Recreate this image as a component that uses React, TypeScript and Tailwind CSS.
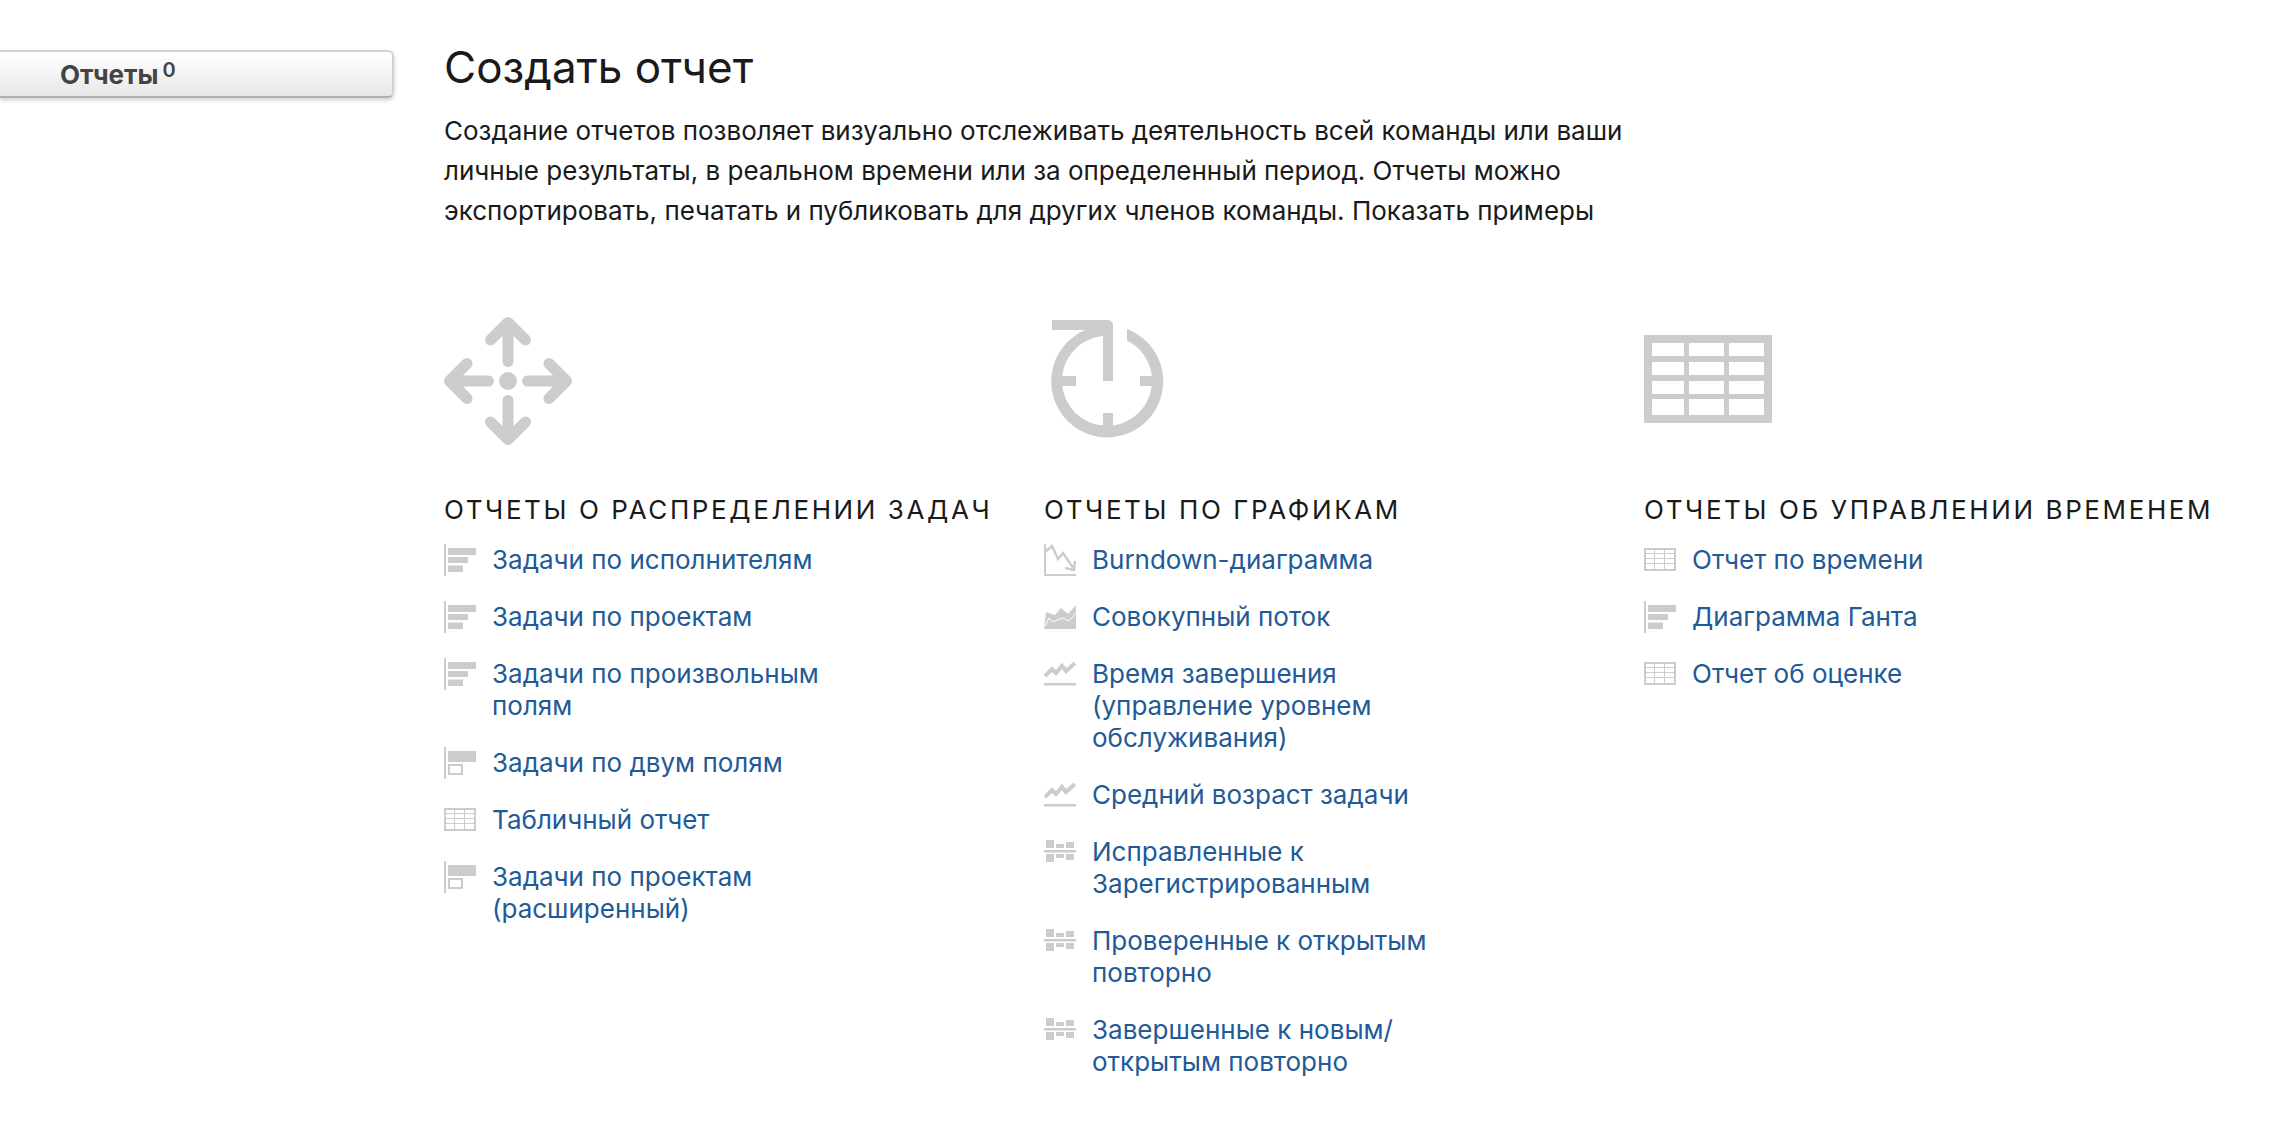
import React from "react";

type IconKind = "bars" | "nested" | "table" | "burndown" | "area" | "trend" | "balance";

function SmallIcon({ kind }: { kind: IconKind }) {
  return (
    <svg viewBox="0 0 32 32" className="size-8 shrink-0 fill-[#cccccc]" aria-hidden="true">
      {kind === "bars" && <path d="M0 0h2v32H0zM4 4h28v7H4zM4 13h20v6H4zM4 21.500h15v6.500H4z" />}
      {kind === "nested" && (
        <path fillRule="evenodd" d="M0 0h2v32H0zM4 4h28v11H4zM4 17h15v11H4zM6 19v7h11v-7z" />
      )}
      {kind === "table" && (
        <path
          fillRule="evenodd"
          d="M0 4h32v23H0zM2 6v3h8v-3zM11 6v3h9v-3zM21 6v3h9v-3zM2 10v4h8v-4zM11 10v4h9v-4zM21 10v4h9v-4zM2 15v4h8v-4zM11 15v4h9v-4zM21 15v4h9v-4zM2 20v5h8v-5zM11 20v5h9v-5zM21 20v5h9v-5z"
        />
      )}
      {kind === "burndown" && (
        <>
          <path d="M0 0h2v30h30v2H0z" />
          <path d="M1 8l7-6 6 13 5-6 11 16M21 24l9 2 1-9" fill="none" stroke="#cccccc" strokeWidth="2.500" />
        </>
      )}
      {kind === "area" && (
        <>
          <path d="M0 28L2 11l9 3 6-7 7 6 8-9v24z" />
          <path d="M1 25l4-8 4 4 9-4 7 3 7-8" fill="none" stroke="#ffffff" />
        </>
      )}
      {kind === "trend" && (
        <>
          <path d="M0 25h32v2.500H0z" />
          <path d="M1 18l7-7 4 4 6-7 4 5 9-8" fill="none" stroke="#cccccc" strokeWidth="4" />
        </>
      )}
      {kind === "balance" && (
        <path d="M0 14h32v2.500H0zM2 4h8v8H2zM12 8h8v4h-8zM22 6h8v6h-8zM2 18h8v8H2zM12 18h8v4h-8zM22 18h8v6h-8z" />
      )}
    </svg>
  );
}

function DistributionIcon() {
  return (
    <svg viewBox="0 0 128 128" className="size-32" fill="none" stroke="#cccccc" strokeWidth="11" strokeLinecap="round" strokeLinejoin="round" aria-hidden="true">
      <circle cx="64" cy="64" r="9" fill="#cccccc" stroke="none" />
      <path d="M64 44.500V5.500M46.500 23L64 5.500 81.500 23" />
      <path d="M64 83.500v39M46.500 105L64 122.500 81.500 105" />
      <path d="M44.500 64H5.500M23 46.500L5.500 64 23 81.500" />
      <path d="M83.500 64h39M105 46.500L122.500 64 105 81.500" />
    </svg>
  );
}

function TimelineIcon() {
  return (
    <svg viewBox="0 0 128 128" className="size-32" fill="#cccccc" aria-hidden="true">
      <path d="M8 3h56a5 5 0 0 1 5 5v56H59V19A45 45 0 1 0 83 23.500V12A56 56 0 1 1 41 13H8z" />
      <path d="M17 59h15v10H17zM96 59h15v10H96zM59 96h10v15H59z" />
    </svg>
  );
}

function TimeTableIcon() {
  return (
    <svg viewBox="0 0 128 128" className="size-32" fill="#cccccc" aria-hidden="true">
      <path
        fillRule="evenodd"
        d="M0 18h128v88H0zM8 26v13h32V26zM45 26v13h35V26zM85 26v13h35V26zM8 45v13h32V45zM45 45v13h35V45zM85 45v13h35V45zM8 64v13h32V64zM45 64v13h35V64zM85 64v13h35V64zM8 82v16h32V82zM45 82v16h35V82zM85 82v16h35V82z"
      />
    </svg>
  );
}

interface Report {
  icon: IconKind;
  title: string;
}

interface Group {
  title: string;
  art: React.ReactNode;
  reports: Report[];
}

const groups: Group[] = [
  {
    title: "Отчеты о распределении задач",
    art: <DistributionIcon />,
    reports: [
      { icon: "bars", title: "Задачи по исполнителям" },
      { icon: "bars", title: "Задачи по проектам" },
      { icon: "bars", title: "Задачи по произвольным полям" },
      { icon: "nested", title: "Задачи по двум полям" },
      { icon: "table", title: "Табличный отчет" },
      { icon: "nested", title: "Задачи по проектам (расширенный)" },
    ],
  },
  {
    title: "Отчеты по графикам",
    art: <TimelineIcon />,
    reports: [
      { icon: "burndown", title: "Burndown-диаграмма" },
      { icon: "area", title: "Совокупный поток" },
      { icon: "trend", title: "Время завершения (управление уровнем обслуживания)" },
      { icon: "trend", title: "Средний возраст задачи" },
      { icon: "balance", title: "Исправленные к Зарегистрированным" },
      { icon: "balance", title: "Проверенные к открытым повторно" },
      { icon: "balance", title: "Завершенные к новым/\u200bоткрытым повторно" },
    ],
  },
  {
    title: "Отчеты об управлении временем",
    art: <TimeTableIcon />,
    reports: [
      { icon: "table", title: "Отчет по времени" },
      { icon: "bars", title: "Диаграмма Ганта" },
      { icon: "table", title: "Отчет об оценке" },
    ],
  },
];

export default function App() {
  return (
    <div className="flex min-h-screen items-start bg-white font-['Inter',sans-serif] text-[#1a1a1a]">
      <nav className="w-[394px] shrink-0 pt-[50px]">
        <button
          type="button"
          className="flex h-12 w-full items-center rounded-r-md border-2 border-l-0 border-[#d2d2d2] border-b-[#b0b0b0] bg-linear-to-b from-white to-[#e8e8e8] pt-0.5 pl-[60px] text-[26px] leading-8 font-bold text-[#444444] shadow-[0_2px_4px_rgba(0,0,0,0.2)]"
        >
          Отчеты<sup className="static ml-1 self-start text-[20px] leading-8 font-semibold">0</sup>
        </button>
      </nav>
      <main className="min-w-0 grow pt-[39px] pr-[30px] pl-[50px]">
        <h1 className="text-[44px] leading-14">Создать отчет</h1>
        <p className="mt-4 max-w-[1180px] text-[26px] leading-10">
          Создание отчетов позволяет визуально отслеживать деятельность всей команды или ваши личные
          результаты, в реальном времени или за определенный период. Отчеты можно экспортировать,
          печатать и публиковать для других членов команды. Показать примеры
        </p>
        <div className="mt-[86px] grid grid-cols-3">
          {groups.map((group) => (
            <section key={group.title} className="min-w-0">
              {group.art}
              <h2 className="mt-[49px] text-[26px] leading-8 tracking-widest whitespace-nowrap uppercase">
                {group.title}
              </h2>
              <ul className="mt-[18px] flex max-w-[400px] flex-col gap-[25px]">
                {group.reports.map((report) => (
                  <li key={report.title}>
                    <a href="#" className="flex items-start gap-4 text-[26px] leading-8 text-[#225a97]">
                      <SmallIcon kind={report.icon} />
                      <span>{report.title}</span>
                    </a>
                  </li>
                ))}
              </ul>
            </section>
          ))}
        </div>
      </main>
    </div>
  );
}
